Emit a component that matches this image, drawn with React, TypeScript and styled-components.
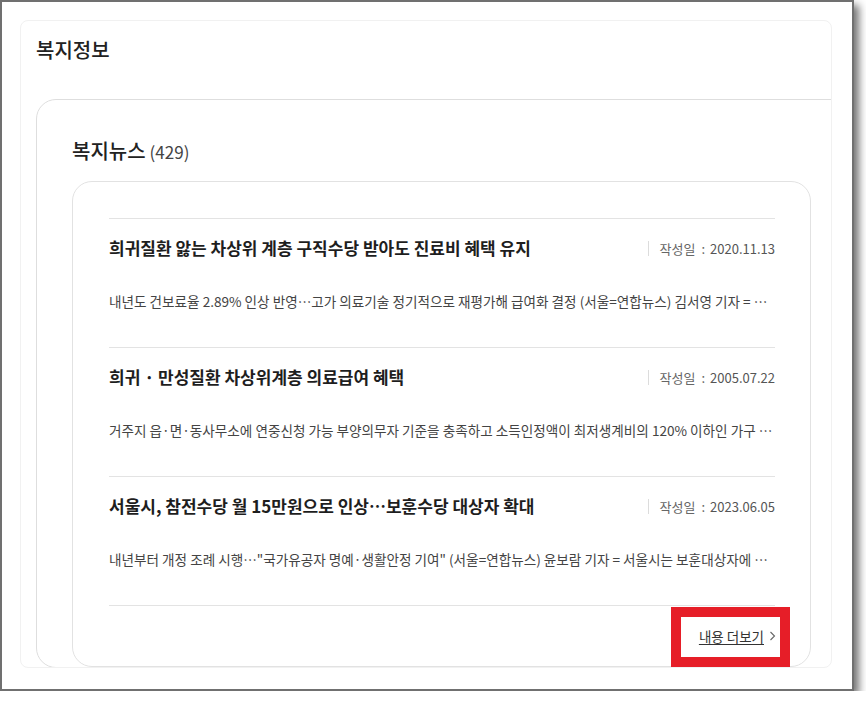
import styled, { createGlobalStyle } from 'styled-components';

const GlobalStyle = createGlobalStyle`
    html, body {
        margin: 0;
        padding: 0;
        background: #ffffff;
    }
    body {
        font-family: 'Noto Sans CJK KR', 'Noto Sans', sans-serif;
        color: #222;
    }
    * {
        box-sizing: border-box;
    }
`;

const newsList = [
    {
        id: 1,
        title: '희귀질환 앓는 차상위 계층 구직수당 받아도 진료비 혜택 유지',
        date: '2020.11.13',
        summary:
            '내년도 건보료율 2.89% 인상 반영…고가 의료기술 정기적으로 재평가해 급여화 결정 (서울=연합뉴스) 김서영 기자 = …',
    },
    {
        id: 2,
        title: '희귀 · 만성질환 차상위계층 의료급여 혜택',
        date: '2005.07.22',
        summary:
            '거주지 읍·면·동사무소에 연중신청 가능 부양의무자 기준을 충족하고 소득인정액이 최저생계비의 120% 이하인 가구 …',
    },
    {
        id: 3,
        title: '서울시, 참전수당 월 15만원으로 인상…보훈수당 대상자 확대',
        date: '2023.06.05',
        summary:
            '내년부터 개정 조례 시행…"국가유공자 명예·생활안정 기여" (서울=연합뉴스) 윤보람 기자 = 서울시는 보훈대상자에 …',
    },
];

const App = () => {
    return (
        <>
            <GlobalStyle />
            <Window>
                <Panel>
                    <PageTitle>복지정보</PageTitle>
                    <Section>
                        <SectionTitle>
                            복지뉴스<Count>(429)</Count>
                        </SectionTitle>
                        <Board>
                            <List>
                                {newsList.map((news) => (
                                    <Item key={news.id}>
                                        <TitleRow>
                                            <Title>{news.title}</Title>
                                            <DateInfo>
                                                <span className='label'>작성일</span>
                                                <span className='colon'>:</span>
                                                {news.date}
                                            </DateInfo>
                                        </TitleRow>
                                        <Summary>{news.summary}</Summary>
                                    </Item>
                                ))}
                            </List>
                            <Footer>
                                <MoreLink href='#'>
                                    <span className='text'>내용 더보기</span>
                                    <Chevron viewBox='0 0 6 10'>
                                        <path d='M1 1l4 4-4 4' />
                                    </Chevron>
                                    <Highlight />
                                </MoreLink>
                            </Footer>
                        </Board>
                    </Section>
                </Panel>
            </Window>
        </>
    );
};

const Window = styled.div`
    width: 854px;
    height: 691px;
    border: 2px solid #707070;
    background: #ffffff;
    padding: 18px 0 0 18px;
    box-shadow: 5px 5px 8px rgba(0, 0, 0, 0.55);
`;

const Panel = styled.div`
    width: 812px;
    height: 648px;
    border: 1px solid #f1f1f1;
    border-radius: 8px;
    overflow: hidden;
    padding: 16px 0 0 15px;
    display: flex;
    flex-direction: column;
`;

const PageTitle = styled.h2`
    margin: 0;
    font-size: 20px;
    line-height: 26px;
    font-weight: 500;
    color: #222;
`;

const Section = styled.section`
    margin-top: 36px;
    width: 860px;
    flex-shrink: 0;
    border: 1px solid #dedede;
    border-radius: 20px;
    padding: 38px 0 0 35px;
`;

const SectionTitle = styled.h3`
    margin: 0;
    font-size: 20px;
    line-height: 26px;
    font-weight: 500;
    color: #222;
`;

const Count = styled.span`
    margin-left: 4px;
    font-size: 17px;
    font-weight: 400;
    color: #444;
`;

const Board = styled.div`
    margin-top: 16px;
    width: 739px;
    border: 1px solid #e2e2e2;
    border-radius: 20px;
    padding: 36px 35px 0 36px;
`;

const List = styled.ul`
    margin: 0;
    padding: 0;
    list-style: none;
    border-top: 1px solid #e3e3e3;
`;

const Item = styled.li`
    padding: 18px 0 36px;
    border-bottom: 1px solid #e3e3e3;
`;

const TitleRow = styled.div`
    display: flex;
    align-items: center;
    justify-content: space-between;
    height: 22px;
`;

const Title = styled.strong`
    font-size: 17px;
    line-height: 22px;
    font-weight: 700;
    color: #1e1e1e;
    white-space: nowrap;
`;

const DateInfo = styled.span`
    flex-shrink: 0;
    display: flex;
    align-items: center;
    border-left: 1px solid #dcdcdc;
    padding-left: 11px;
    height: 15px;
    font-size: 13px;
    line-height: 15px;
    color: #555;
    white-space: nowrap;
    .label {
        color: #666;
    }
    .colon {
        margin: 0 5px 0 6px;
        color: #666;
    }
`;

const Summary = styled.p`
    margin: 32px 0 0;
    font-size: 13.6px;
    line-height: 20px;
    color: #444;
    white-space: nowrap;
    overflow: hidden;
    text-overflow: ellipsis;
`;

const Footer = styled.div`
    display: flex;
    justify-content: flex-end;
    padding-top: 22px;
    height: 60px;
`;

const MoreLink = styled.a`
    position: relative;
    display: flex;
    align-items: center;
    height: 16px;
    margin-right: -1px;
    font-size: 13.5px;
    line-height: 16px;
    color: #333;
    text-decoration: none;
    .text {
        text-decoration: underline;
        text-underline-offset: 2px;
    }
`;

const Chevron = styled.svg`
    width: 7px;
    height: 10px;
    margin-left: 5px;
    fill: none;
    stroke: #666;
    stroke-width: 1.1;
`;

const Highlight = styled.span`
    position: absolute;
    top: -21px;
    right: -14px;
    width: 119px;
    height: 60px;
    border: 10px solid #e61e28;
    pointer-events: none;
`;

export default App;
